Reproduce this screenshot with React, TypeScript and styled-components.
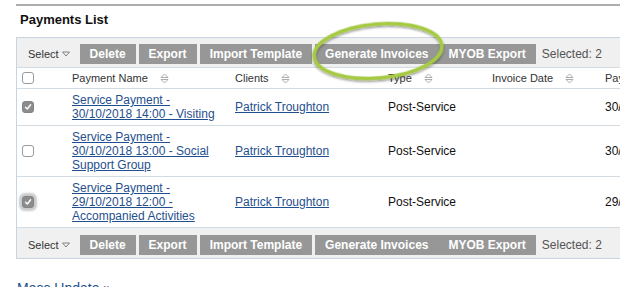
import React from "react";
import styled, { createGlobalStyle } from "styled-components";

const GlobalStyle = createGlobalStyle`
  html, body { margin: 0; padding: 0; background: #fff; overflow: hidden; }
  body { font-family: "Liberation Sans", Arial, Helvetica, sans-serif; }
`;

const Page = styled.div`
  position: relative;
  padding: 4px 0 0 16px;
  width: 720px;
`;

const Rule = styled.div`
  height: 2px;
  background: #adadad;
`;

const Title = styled.h2`
  margin: 6px 0 0 4px;
  font-size: 13px;
  line-height: 16px;
  font-weight: bold;
  color: #111;
`;

const ListBox = styled.div`
  margin-top: 9px;
  width: 700px;
  border: 1px solid #c8d4df;
`;

const Toolbar = styled.div<{ $edge: "top" | "bottom" }>`
  display: flex;
  align-items: center;
  background: #f0f0f0;
  padding: ${(p) => (p.$edge === "top" ? "6px 0 3px 11px" : "7px 0 3px 11px")};
  border-bottom: ${(p) => (p.$edge === "top" ? "1px solid #d3dbe3" : "none")};
`;

const SelectMenu = styled.div`
  display: flex;
  align-items: center;
  gap: 3px;
  margin-right: 10px;
  font-size: 11px;
  color: #333;
`;

const ToolButton = styled.button<{ $joined?: boolean }>`
  height: 20px;
  padding: 0 10px;
  margin: 0 ${(p) => (p.$joined ? "0" : "3px")} 0 0;
  border: none;
  background: #979797;
  color: #fff;
  font-family: inherit;
  font-size: 12px;
  font-weight: bold;
  line-height: 20px;
  white-space: nowrap;
`;

const SelectedCount = styled.span`
  margin-left: 6px;
  font-size: 12px;
  color: #555;
`;

const COLS = "55px 163px 153px 104px 113px 112px";

const HeaderRow = styled.div`
  display: grid;
  grid-template-columns: ${COLS};
  height: 20px;
  border-bottom: 1px solid #d3dbe3;
  font-size: 11px;
  color: #333;
`;

const HeaderCell = styled.div<{ $check?: boolean }>`
  display: flex;
  align-items: center;
  gap: 12px;
  padding-left: ${(p) => (p.$check ? "5px" : "0")};
  white-space: nowrap;
`;

const Row = styled.div`
  display: grid;
  grid-template-columns: ${COLS};
  padding: 4px 0;
  border-bottom: 1px solid #d3dbe3;
  font-size: 12px;
  line-height: 14px;
  color: #111;
`;

const Cell = styled.div<{ $check?: boolean }>`
  display: flex;
  align-items: center;
  padding-left: ${(p) => (p.$check ? "5px" : "0")};
  white-space: nowrap;
`;

const NameLink = styled.a`
  display: block;
  max-width: 152px;
  white-space: normal;
  color: #1f4f8e;
  text-decoration: underline;
`;

const ClientLink = styled.a`
  color: #1f4f8e;
  text-decoration: underline;
`;

const Box = styled.span<{ $checked?: boolean; $focused?: boolean }>`
  display: inline-flex;
  align-items: center;
  justify-content: center;
  box-sizing: border-box;
  width: 12px;
  height: 12px;
  border-radius: 3px;
  border: 1px solid ${(p) => (p.$checked ? "#858585" : "#9a9a9a")};
  background: ${(p) => (p.$checked ? "#8c8c8c" : "#fff")};
  box-shadow: ${(p) => (p.$focused ? "0 0 2px 3px rgba(140,140,140,0.45)" : "none")};
`;

const MassLink = styled.a`
  display: block;
  margin: 21px 0 0 1px;
  font-size: 14px;
  line-height: 16px;
  color: #1f4f8e;
  text-decoration: none;
`;

const Highlight = styled.svg`
  position: absolute;
  left: 298px;
  top: 14px;
  overflow: visible;
  pointer-events: none;
`;

const SortIcon = () => (
  <svg width="9" height="11" viewBox="0 0 9 11">
    <path d="M1 4.5 L4.5 1 L8 4.5 Z" fill="none" stroke="#a3a3a3" strokeWidth="0.9" strokeLinejoin="round" />
    <path d="M1 6.5 L8 6.5 L4.5 10 Z" fill="none" stroke="#a3a3a3" strokeWidth="0.9" strokeLinejoin="round" />
  </svg>
);

const CaretDown = () => (
  <svg width="8" height="6" viewBox="0 0 8 6">
    <path d="M0.5 1 L7.5 1 L4 5 Z" fill="none" stroke="#777" strokeWidth="0.9" strokeLinejoin="round" />
  </svg>
);

const Check = ({ checked, focused }: { checked?: boolean; focused?: boolean }) => (
  <Box $checked={checked} $focused={focused}>
    {checked && (
      <svg width="8" height="8" viewBox="0 0 8 8">
        <path d="M1.5 4.2 L3.3 6 L6.6 1.8" fill="none" stroke="#fff" strokeWidth="1.4" strokeLinecap="round" strokeLinejoin="round" />
      </svg>
    )}
  </Box>
);

const ToolbarContent = ({ edge }: { edge: "top" | "bottom" }) => (
  <Toolbar $edge={edge}>
    <SelectMenu>
      Select <CaretDown />
    </SelectMenu>
    <ToolButton>Delete</ToolButton>
    <ToolButton>Export</ToolButton>
    <ToolButton>Import Template</ToolButton>
    <ToolButton $joined>Generate Invoices</ToolButton>
    <ToolButton $joined>MYOB Export</ToolButton>
    <SelectedCount>Selected: 2</SelectedCount>
  </Toolbar>
);

const rows = [
  { name: "Service Payment - 30/10/2018 14:00 - Visiting", date: "30/10/2018", checked: true, focused: false },
  { name: "Service Payment - 30/10/2018 13:00 - Social Support Group", date: "30/10/2018", checked: false, focused: false },
  { name: "Service Payment - 29/10/2018 12:00 - Accompanied Activities", date: "29/10/2018", checked: true, focused: true },
];

export default function App() {
  return (
    <>
      <GlobalStyle />
      <Page>
        <Rule />
        <Title>Payments List</Title>
        <ListBox>
          <ToolbarContent edge="top" />
          <HeaderRow>
            <HeaderCell $check>
              <Check />
            </HeaderCell>
            <HeaderCell>
              Payment Name <SortIcon />
            </HeaderCell>
            <HeaderCell>
              Clients <SortIcon />
            </HeaderCell>
            <HeaderCell>
              Type <SortIcon />
            </HeaderCell>
            <HeaderCell>
              Invoice Date <SortIcon />
            </HeaderCell>
            <HeaderCell>
              Payment Date <SortIcon />
            </HeaderCell>
          </HeaderRow>
          {rows.map((r) => (
            <Row key={r.name}>
              <Cell $check>
                <Check checked={r.checked} focused={r.focused} />
              </Cell>
              <Cell>
                <NameLink href="#">{r.name}</NameLink>
              </Cell>
              <Cell>
                <ClientLink href="#">Patrick Troughton</ClientLink>
              </Cell>
              <Cell>Post-Service</Cell>
              <Cell />
              <Cell>{r.date}</Cell>
            </Row>
          ))}
          <ToolbarContent edge="bottom" />
        </ListBox>
        <MassLink href="#">Mass Update »</MassLink>
        <Highlight width="162" height="78" viewBox="0 0 162 78">
          <defs>
            <filter id="hlShadow" x="-20%" y="-30%" width="140%" height="160%">
              <feDropShadow dx="0" dy="1.5" stdDeviation="1.3" floodColor="#000" floodOpacity="0.45" />
            </filter>
          </defs>
          <ellipse
            cx="80"
            cy="37"
            rx="64"
            ry="27"
            fill="none"
            stroke="#a6ca42"
            strokeWidth="3.5"
            transform="rotate(-5 80 37)"
            filter="url(#hlShadow)"
          />
        </Highlight>
      </Page>
    </>
  );
}
